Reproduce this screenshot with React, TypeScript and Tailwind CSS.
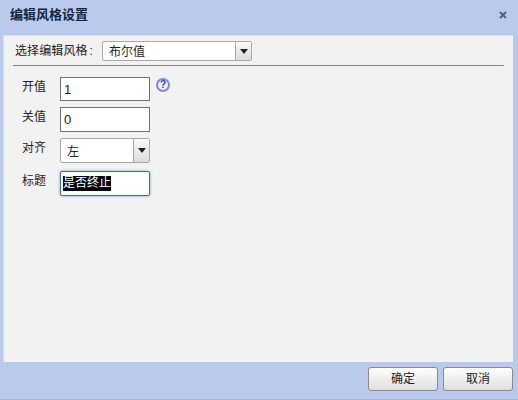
const cjk = "font-['Liberation_Sans','Noto_Sans_CJK_SC',sans-serif]";

function Arrow() {
  return (
    <div className="w-4 flex items-center justify-center border-l border-[#a8a8a8] bg-gradient-to-b from-[#fafafa] to-[#dcdcdc]">
      <div className="w-0 h-0 border-x-[4px] border-x-transparent border-t-[5px] border-t-[#222]" />
    </div>
  );
}

function Label({ children }: { children: string }) {
  return <div className="w-[56px] pl-[18px] pb-[5px] text-[12px] text-[#222]">{children}</div>;
}

export default function App() {
  return (
    <div className={`${cjk} w-[518px] h-[400px] flex flex-col bg-[#b9caec] overflow-hidden`}>
      <div className="h-[35px] flex items-center justify-between pl-[10px] pr-[11px] pb-[6px]">
        <span className="text-[13px] font-bold text-[#15243c]">编辑风格设置</span>
        <svg width="8" height="8" viewBox="0 0 8 8" className="stroke-[#5a6270]">
          <path d="M1 1L7 7M7 1L1 7" strokeWidth="2" />
        </svg>
      </div>
      <div className="ml-[3px] w-[510px] h-[327px] bg-[#f2f2f2] border-l border-t border-[#d5dff3]">
        <div className="flex items-center pl-[11px] pt-[5px] h-[25px]">
          <span className="w-[87px] whitespace-nowrap text-[12px] tracking-[0.1px] text-[#222]">选择编辑风格<span className="ml-[2px]">:</span></span>
          <div className="w-[150px] h-[20px] flex bg-white border border-[#a9a9a9] rounded-[2px]">
            <span className="flex-1 pl-[6px] text-[12px] leading-[21px] text-[#222]">布尔值</span>
            <Arrow />
          </div>
        </div>
        <div className="mt-[4px] ml-[9px] mr-[9px] border-t border-[#5f8cb8]" />
        <div className="flex items-center mt-[11px] h-[24px]">
          <Label>开值</Label>
          <input readOnly value="1" className="w-[90px] h-[24px] pl-[3px] bg-white border border-[#707070] text-[13px] text-[#222] outline-none" />
          <div className="ml-[6px] mb-[9px] w-[14px] h-[14px] rounded-full border-2 border-[#7a8ad6] bg-[#eef1fb] flex items-center justify-center text-[10px] font-bold text-[#2f44a8]">?</div>
        </div>
        <div className="flex items-center mt-[6px] h-[25px]">
          <Label>关值</Label>
          <input readOnly value="0" className="w-[90px] h-[25px] pl-[3px] bg-white border border-[#707070] text-[13px] text-[#222] outline-none" />
        </div>
        <div className="flex items-center mt-[6px] h-[25px]">
          <Label>对齐</Label>
          <div className="w-[90px] h-[25px] flex bg-white border border-[#a9a9a9] rounded-[2px]">
            <span className="flex-1 pl-[6px] text-[12px] leading-[27px] text-[#222]">左</span>
            <Arrow />
          </div>
        </div>
        <div className="flex items-center mt-[8px] h-[25px]">
          <Label>标题</Label>
          <div className="w-[90px] h-[25px] pl-[2px] flex items-center bg-white border border-[#3d6f9e] shadow-[0_0_3px_#6fa3d8] rounded-[2px]">
            <span className="bg-black text-white text-[12px] leading-[15px]">是否终止</span>
          </div>
        </div>
      </div>
      <div className="flex-1 flex justify-end items-center gap-[5px] pr-[5px] pb-[3px] border-b border-[#a9b6cf]">
        <button className="w-[70px] h-[24px] rounded-[3px] border border-[#8a8a8a] bg-gradient-to-b from-white to-[#dedede] text-[12px] text-[#222]">确定</button>
        <button className="w-[70px] h-[24px] rounded-[3px] border border-[#8a8a8a] bg-gradient-to-b from-white to-[#dedede] text-[12px] text-[#222]">取消</button>
      </div>
    </div>
  );
}
